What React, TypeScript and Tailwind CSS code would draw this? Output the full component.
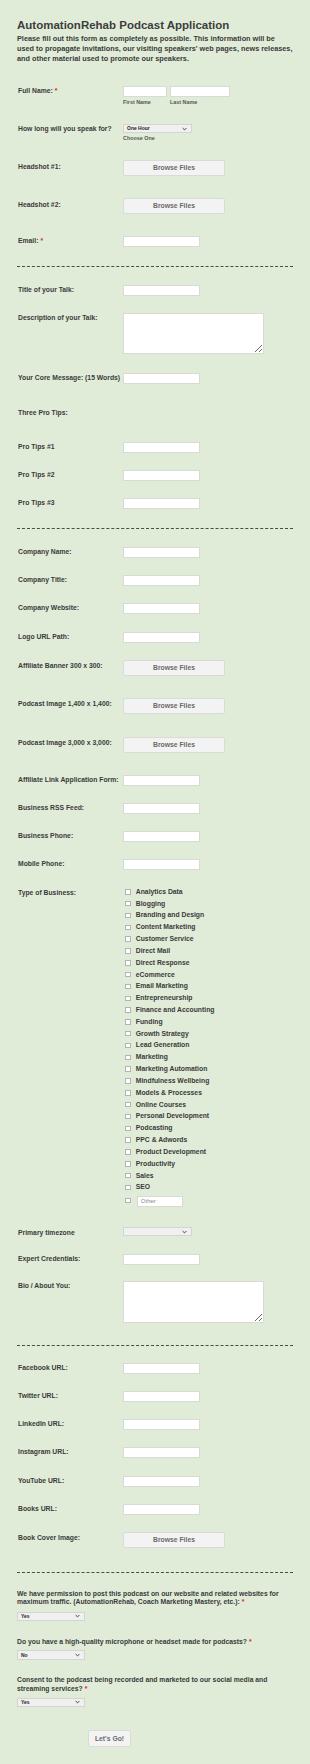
import type { FC, ReactNode } from 'react';

const Req = () => <span className="ml-[2px] text-[#e0262a]">*</span>;

const Row: FC<{ h: string; label?: ReactNode; pt?: string; children?: ReactNode }> = ({
	h,
	label,
	pt = '',
	children
}) => (
	<div className={`flex ${h}`}>
		<div className={`w-[106px] shrink-0 pl-px leading-[10px] ${pt}`}>{label}</div>
		<div>{children}</div>
	</div>
);

const TextInput: FC<{ w?: string }> = ({ w = 'w-[77px]' }) => (
	<input
		type="text"
		className={`block ${w} h-[11px] border border-[#d7dbd3] bg-white p-0 outline-none`}
	/>
);

const Browse = () => (
	<button
		type="button"
		className="flex h-[16.5px] w-[102px] items-center justify-center rounded-[2px] border border-[#d9dbd6] bg-[#f3f3f3] text-[#6a6a6a]"
	>
		Browse Files
	</button>
);

const Select: FC<{ value?: string; w?: string }> = ({ value = '', w = 'w-[69px]' }) => (
	<div
		className={`flex h-[9.5px] ${w} items-center justify-between border border-[#d3d5d0] bg-[#f0f0f0] pl-[3px] pr-[4px] text-[5px] leading-none text-[#222]`}
	>
		<span>{value}</span>
		<svg width="5" height="4" viewBox="0 0 5 4" className="shrink-0">
			<path d="M0.6 1 L2.5 2.9 L4.4 1" fill="none" stroke="#333" strokeWidth="0.9" />
		</svg>
	</div>
);

const Divider: FC<{ h: string }> = ({ h }) => (
	<div className={h}>
		<div className="border-t border-dashed border-[#4a4a4a]" />
	</div>
);

const business = [
	'Analytics Data',
	'Blogging',
	'Branding and Design',
	'Content Marketing',
	'Customer Service',
	'Direct Mail',
	'Direct Response',
	'eCommerce',
	'Email Marketing',
	'Entrepreneurship',
	'Finance and Accounting',
	'Funding',
	'Growth Strategy',
	'Lead Generation',
	'Marketing',
	'Marketing Automation',
	'Mindfulness Wellbeing',
	'Models & Processes',
	'Online Courses',
	'Personal Development',
	'Podcasting',
	'PPC & Adwords',
	'Product Development',
	'Productivity',
	'Sales',
	'SEO'
];

const Box = () => (
	<span className="ml-[2.3px] mr-[5px] block h-[5.5px] w-[5.5px] shrink-0 border border-[#b3b3b3] bg-white" />
);

export default function App() {
	return (
		<div className="min-h-[1764px] bg-[#e1ecd8] px-[17px] pt-[19px] font-['Liberation_Sans',Arial,sans-serif] text-[6.8px] font-bold text-[#3a3a3a]">
			<h1 className="text-[11.5px] leading-[13px] text-[#3d3d3d]">
				AutomationRehab Podcast Application
			</h1>
			<p className="mt-[2px] whitespace-nowrap text-[7.3px] leading-[9.8px]">
				Please fill out this form as completely as possible. This information will be
				<br />
				used to propagate invitations, our visiting speakers' web pages, news releases,
				<br />
				and other material used to promote our speakers.
			</p>

			<div className="mt-[22.5px]">
				<Row
					h="h-[38px]"
					label={
						<>
							Full Name:
							<Req />
						</>
					}
				>
					<div className="flex gap-[3px]">
						<div>
							<TextInput w="w-[44px]" />
							<div className="mt-[2px] text-[5.4px] leading-[6px] text-[#555]">First Name</div>
						</div>
						<div>
							<TextInput w="w-[60px]" />
							<div className="mt-[2px] text-[5.4px] leading-[6px] text-[#555]">Last Name</div>
						</div>
					</div>
				</Row>
				<Row h="h-[36px]" label="How long will you speak for?">
					<Select value="One Hour" />
					<div className="mt-[2px] text-[5.4px] leading-[6px] text-[#555]">Choose One</div>
				</Row>
				<Row h="h-[38px]" pt="pt-[2px]" label="Headshot #1:">
					<Browse />
				</Row>
				<Row h="h-[38px]" pt="pt-[2px]" label="Headshot #2:">
					<Browse />
				</Row>
				<Row
					h="h-[30px]"
					label={
						<>
							Email:
							<Req />
						</>
					}
				>
					<TextInput />
				</Row>
				<Divider h="h-[19px]" />
				<Row h="h-[28px]" label="Title of your Talk:">
					<TextInput />
				</Row>
				<Row h="h-[60px]" label="Description of your Talk:">
					<textarea className="block h-[41px] w-[141px] border border-[#d7dbd3] bg-white p-0 outline-none" />
				</Row>
				<Row h="h-[35px]" label="Your Core Message: (15 Words)">
					<TextInput />
				</Row>
				<Row h="h-[34px]" label="Three Pro Tips:" />
				<Row h="h-[28px]" label="Pro Tips #1">
					<TextInput />
				</Row>
				<Row h="h-[28px]" label="Pro Tips #2">
					<TextInput />
				</Row>
				<Row h="h-[30px]" label="Pro Tips #3">
					<TextInput />
				</Row>
				<Divider h="h-[19px]" />
				<Row h="h-[28px]" label="Company Name:">
					<TextInput />
				</Row>
				<Row h="h-[28px]" label="Company Title:">
					<TextInput />
				</Row>
				<Row h="h-[29px]" label="Company Website:">
					<TextInput />
				</Row>
				<Row h="h-[28px]" label="Logo URL Path:">
					<TextInput />
				</Row>
				<Row h="h-[38px]" pt="pt-[1px]" label="Affiliate Banner 300 x 300:">
					<Browse />
				</Row>
				<Row h="h-[39px]" pt="pt-[1px]" label="Podcast Image 1,400 x 1,400:">
					<Browse />
				</Row>
				<Row h="h-[38px]" pt="pt-[1px]" label="Podcast Image 3,000 x 3,000:">
					<Browse />
				</Row>
				<Row h="h-[28px]" label="Affiliate Link Application Form:">
					<TextInput />
				</Row>
				<Row h="h-[28px]" label="Business RSS Feed:">
					<TextInput />
				</Row>
				<Row h="h-[28px]" label="Business Phone:">
					<TextInput />
				</Row>
				<Row h="h-[27px]" label="Mobile Phone:">
					<TextInput />
				</Row>
				<Row h="h-[341px]" pt="pt-[2px]" label="Type of Business:">
					{business.map((b) => (
						<div key={b} className="flex h-[11.84px] items-center whitespace-nowrap">
							<Box />
							<span>{b}</span>
						</div>
					))}
					<div className="mt-[2.4px] flex items-start">
						<span className="mt-[2px] block">
							<Box />
						</span>
						<div className="ml-[1px] flex h-[11px] w-[46px] items-center border border-[#d7dbd3] bg-white pl-[3px] text-[6px] font-normal text-[#8a8a8a]">
							Other
						</div>
					</div>
				</Row>
				<Row h="h-[27px]" pt="pt-[1px]" label="Primary timezone">
					<Select />
				</Row>
				<Row h="h-[27px]" label="Expert Credentials:">
					<TextInput />
				</Row>
				<Row h="h-[64px]" label="Bio / About You:">
					<textarea className="block h-[42px] w-[141px] border border-[#d7dbd3] bg-white p-0 outline-none" />
				</Row>
				<Divider h="h-[18px]" />
				<Row h="h-[28px]" label="Facebook URL:">
					<TextInput />
				</Row>
				<Row h="h-[28px]" label="Twitter URL:">
					<TextInput />
				</Row>
				<Row h="h-[28px]" label="LinkedIn URL:">
					<TextInput />
				</Row>
				<Row h="h-[29px]" label="Instagram URL:">
					<TextInput />
				</Row>
				<Row h="h-[28px]" label="YouTube URL:">
					<TextInput />
				</Row>
				<Row h="h-[28px]" label="Books URL:">
					<TextInput />
				</Row>
				<Row h="h-[40px]" pt="pt-[1px]" label="Book Cover Image:">
					<Browse />
				</Row>
				<Divider h="h-[18px]" />

				<div className="leading-[8.4px]">
					We have permission to post this podcast on our website and related websites for
					maximum traffic. (AutomationRehab, Coach Marketing Mastery, etc.):
					<Req />
				</div>
				<div className="mt-[4.8px]">
					<Select value="Yes" w="w-[68px]" />
				</div>
				<div className="mt-[16.8px] leading-[8.4px]">
					Do you have a high-quality microphone or headset made for podcasts?
					<Req />
				</div>
				<div className="mt-[4.1px]">
					<Select value="No" w="w-[68px]" />
				</div>
				<div className="mt-[16.7px] leading-[8.4px]">
					Consent to the podcast being recorded and marketed to our social media and
					streaming services?
					<Req />
				</div>
				<div className="mt-[4.4px]">
					<Select value="Yes" w="w-[68px]" />
				</div>
				<div className="mt-[23.3px] pl-[71px]">
					<button
						type="button"
						className="flex h-[17px] w-[43px] items-center justify-center rounded-[2px] border border-[#d9dbd6] bg-[#f3f3f3] text-[#6a6a6a]"
					>
						Let's Go!
					</button>
				</div>
			</div>
		</div>
	);
}
